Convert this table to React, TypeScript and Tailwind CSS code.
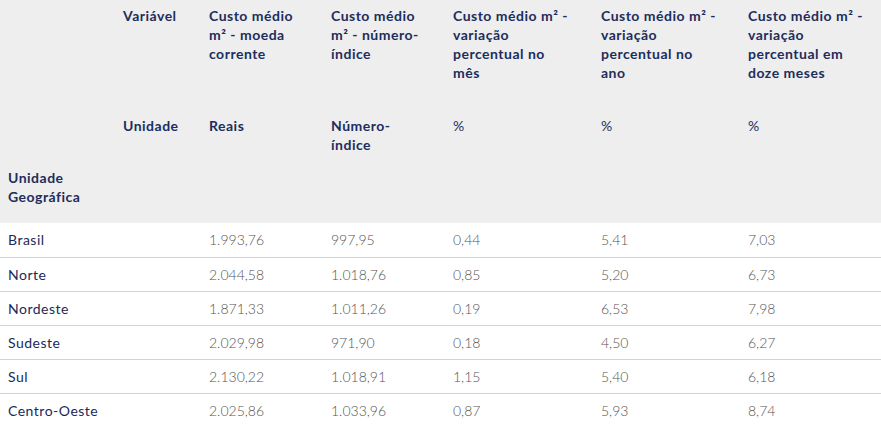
import React from "react";

const rows: [string, string, string, string, string, string][] = [
  ["Brasil", "1.993,76", "997,95", "0,44", "5,41", "7,03"],
  ["Norte", "2.044,58", "1.018,76", "0,85", "5,20", "6,73"],
  ["Nordeste", "1.871,33", "1.011,26", "0,19", "6,53", "7,98"],
  ["Sudeste", "2.029,98", "971,90", "0,18", "4,50", "6,27"],
  ["Sul", "2.130,22", "1.018,91", "1,15", "5,40", "6,18"],
  ["Centro-Oeste", "2.025,86", "1.033,96", "0,87", "5,93", "8,74"],
];

const th =
  "px-2 align-top text-left font-bold text-[14px] leading-[19px] tracking-[0.5px] text-[#1d2d5c] whitespace-nowrap";

export default function App() {
  return (
    <div className="w-[881px] h-[427px] overflow-hidden bg-white font-['Lato','Open_Sans',sans-serif]">
      <table className="w-full table-fixed border-collapse">
        <colgroup>
          <col className="w-[115px]" />
          <col className="w-[86px]" />
          <col className="w-[122px]" />
          <col className="w-[122px]" />
          <col className="w-[148px]" />
          <col className="w-[147px]" />
          <col className="w-[141px]" />
        </colgroup>
        <thead className="bg-[#eeeeee]">
          <tr className="h-[110px]">
            <th className={th} />
            <th className={`${th} pt-[6px]`}>Variável</th>
            <th className={`${th} pt-[6px]`}>
              Custo médio
              <br />
              m² - moeda
              <br />
              corrente
            </th>
            <th className={`${th} pt-[6px]`}>
              Custo médio
              <br />
              m² - número-
              <br />
              índice
            </th>
            <th className={`${th} pt-[6px]`}>
              Custo médio m² -
              <br />
              variação
              <br />
              percentual no
              <br />
              mês
            </th>
            <th className={`${th} pt-[6px]`}>
              Custo médio m² -
              <br />
              variação
              <br />
              percentual no
              <br />
              ano
            </th>
            <th className={`${th} pt-[6px]`}>
              Custo médio m² -
              <br />
              variação
              <br />
              percentual em
              <br />
              doze meses
            </th>
          </tr>
          <tr className="h-[52px]">
            <th className={th} />
            <th className={`${th} pt-[6px]`}>Unidade</th>
            <th className={`${th} pt-[6px]`}>Reais</th>
            <th className={`${th} pt-[6px]`}>
              Número-
              <br />
              índice
            </th>
            <th className={`${th} pt-[6px] font-normal`}>%</th>
            <th className={`${th} pt-[6px] font-normal`}>%</th>
            <th className={`${th} pt-[6px] font-normal`}>%</th>
          </tr>
          <tr className="h-[61px]">
            <th className={`${th} pt-[6px]`}>
              Unidade
              <br />
              Geográfica
            </th>
            <th className={th} />
            <th className={th} />
            <th className={th} />
            <th className={th} />
            <th className={th} />
            <th className={th} />
          </tr>
        </thead>
        <tbody>
          {rows.map((r, i) => (
            <tr
              key={r[0]}
              className={`h-[34px] ${i < rows.length - 1 ? "border-b border-[#c9d3e8]" : ""}`}
            >
              <td className="px-2 text-[14px] tracking-[0.5px] text-[#1a2a58] font-normal whitespace-nowrap">
                {r[0]}
              </td>
              <td />
              {r.slice(1).map((v, j) => (
                <td key={j} className="px-2 text-[14px] text-[#555555] font-light">
                  {v}
                </td>
              ))}
            </tr>
          ))}
        </tbody>
      </table>
    </div>
  );
}
